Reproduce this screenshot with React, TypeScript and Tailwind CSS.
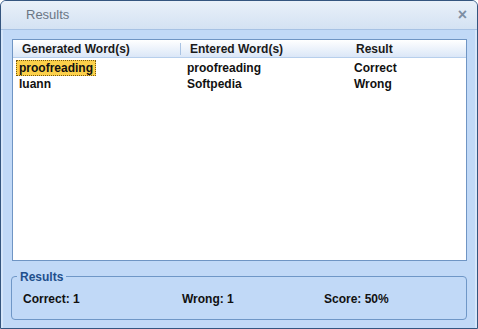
const rows = [
  { generated: "proofreading", entered: "proofreading", result: "Correct", selected: true },
  { generated: "luann", entered: "Softpedia", result: "Wrong", selected: false },
];

const font = { fontFamily: '"Liberation Sans", Arial, sans-serif' };

export default function App() {
  return (
    <div
      className="relative flex h-[329px] w-[478px] flex-col overflow-hidden rounded-t-[6px] border border-[#34557f] bg-[#c1d9f7]"
      style={font}
    >
      {/* title bar */}
      <div className="flex h-[29px] shrink-0 items-center justify-between border-b border-[#a7c2e4] bg-gradient-to-b from-[#e9f0f9] to-[#d4e2f3] pl-[25px] pr-[10px]">
        <span className="text-[13px] text-[#6b7684]">Results</span>
        <span className="text-[16px] font-bold leading-none text-[#7d8ea3]">×</span>
      </div>

      <div className="flex flex-1 flex-col border-x-2 border-[#d6e6fa] px-[8px] pt-[9px]">
        {/* list view */}
        <div className="ml-[1px] flex h-[222px] w-[455px] flex-col border border-[#6f95c4] bg-white">
          <div className="flex h-[18px] items-center border-b border-[#b7cfec] bg-gradient-to-b from-white to-[#dbe7f7] text-[12px] font-bold text-[#1a1a1a]">
            <div className="w-[167px] pl-[9px]">Generated Word(s)</div>
            <div className="h-[12px] w-px bg-[#a9c3e3]" />
            <div className="w-[159px] pl-[9px]">Entered Word(s)</div>
            <div className="flex-1 pl-[16px]">Result</div>
          </div>
          <div className="flex flex-col pt-[2px] text-[12px] font-bold text-[#111]">
            {rows.map((r) => (
              <div key={r.generated} className="flex h-[16px] items-center">
                <div className="w-[171px] pl-[3px]">
                  <span
                    className={
                      r.selected
                        ? "inline-block border border-dotted border-[#7a5a10] bg-[#fcd04a] px-[2px] leading-[14px]"
                        : "inline-block px-[3px] leading-[14px]"
                    }
                  >
                    {r.generated}
                  </span>
                </div>
                <div className="w-[167px] pl-[3px]">{r.entered}</div>
                <div className="flex-1 pl-[3px]">{r.result}</div>
              </div>
            ))}
          </div>
        </div>

        {/* group box */}
        <div className="relative mt-[15px] flex h-[44px] w-[456px] items-center rounded-[4px] border border-[#6f97c7] text-[12px] font-bold text-[#111]">
          <span className="absolute left-[5px] top-[-9px] bg-[#c1d9f7] px-[3px] text-[12px] font-bold text-[#1f4f8c]">
            Results
          </span>
          <div className="w-[158px] pl-[11px] pt-[1px]">Correct: 1</div>
          <div className="w-[142px] pl-[12px] pt-[1px]">Wrong: 1</div>
          <div className="flex-1 pl-[12px] pt-[1px]">Score: 50%</div>
        </div>
      </div>
    </div>
  );
}
